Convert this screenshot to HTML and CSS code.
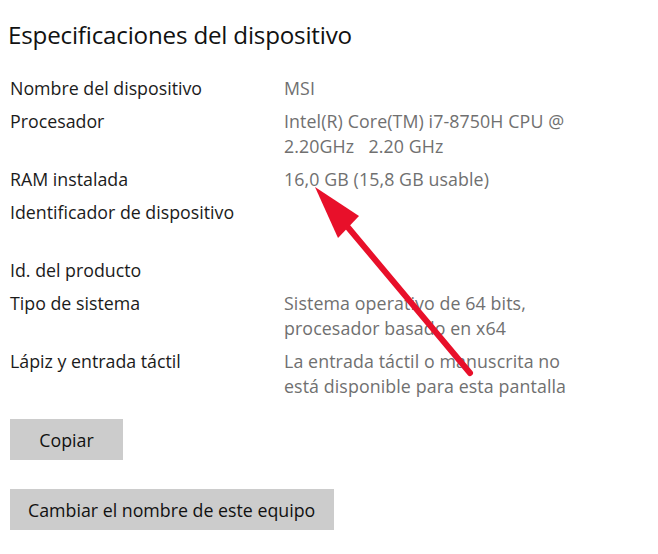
FILE: index.html
```html
<!DOCTYPE html>
<html lang="es">
<head>
<meta charset="utf-8">
<title>Especificaciones del dispositivo</title>
<link rel="stylesheet" href="styles.css">
</head>
<body>
<main class="page">
  <h1 class="title">Especificaciones del dispositivo</h1>
  <dl class="specs">
    <dt>Nombre del dispositivo</dt>
    <dd>MSI</dd>
    <dt>Procesador</dt>
    <dd>Intel(R) Core(TM) i7-8750H CPU @<br>2.20GHz&nbsp;&nbsp; 2.20 GHz</dd>
    <dt>RAM instalada</dt>
    <dd>16,0 GB (15,8 GB usable)</dd>
    <dt>Identificador de dispositivo</dt>
    <dd class="blank">&nbsp;<br>&nbsp;</dd>
    <dt>Id. del producto</dt>
    <dd>&nbsp;</dd>
    <dt>Tipo de sistema</dt>
    <dd>Sistema operativo de 64 bits,<br>procesador basado en x64</dd>
    <dt>Lápiz y entrada táctil</dt>
    <dd>La entrada táctil o manuscrita no<br>está disponible para esta pantalla</dd>
  </dl>
  <div class="actions">
    <button class="btn btn-copy" type="button">Copiar</button>
    <button class="btn" type="button">Cambiar el nombre de este equipo</button>
  </div>
  <svg class="arrow" width="658" height="554" viewBox="0 0 658 554" aria-hidden="true">
    <line x1="346" y1="225" x2="470" y2="373" stroke="#e8102a" stroke-width="6" stroke-linecap="round"/>
    <polygon points="315,187 359,216 338,238" fill="#e8102a"/>
  </svg>
</main>
</body>
</html>
```

FILE: styles.css
```css
html, body {
  margin: 0;
  padding: 0;
  background: #ffffff;
}

.page {
  position: relative;
  width: 658px;
  height: 554px;
  padding: 0 0 0 10px;
  box-sizing: border-box;
  font-family: "Open Sans", "Noto Sans", "Liberation Sans", sans-serif;
  color: #1b1b1b;
  overflow: hidden;
}

.title {
  margin: 0 0 0 -2px;
  padding-top: 18px;
  font-size: 24.2px;
  font-weight: 400;
  line-height: 34px;
  letter-spacing: -0.2px;
  color: #111111;
}

.specs {
  display: grid;
  grid-template-columns: 274px 1fr;
  row-gap: 8px;
  margin: 24px 0 0 0;
  font-size: 17.8px;
  line-height: 25px;
}

.specs dt {
  margin: 0;
  color: #1b1b1b;
  white-space: nowrap;
}

.specs dd {
  margin: 0;
  color: #707070;
  white-space: nowrap;
  letter-spacing: 0.1px;
}

.actions {
  display: flex;
  flex-direction: column;
  align-items: flex-start;
  gap: 29px;
  margin-top: 20px;
}

.btn {
  font-family: inherit;
  font-size: 17.8px;
  color: #111111;
  background: #cccccc;
  border: 0;
  height: 41px;
  padding: 0 19px 0 18px;
  margin: 0;
}

.btn-copy {
  width: 113px;
  padding: 0;
}

.arrow {
  position: absolute;
  left: 0;
  top: 0;
  pointer-events: none;
}
```
